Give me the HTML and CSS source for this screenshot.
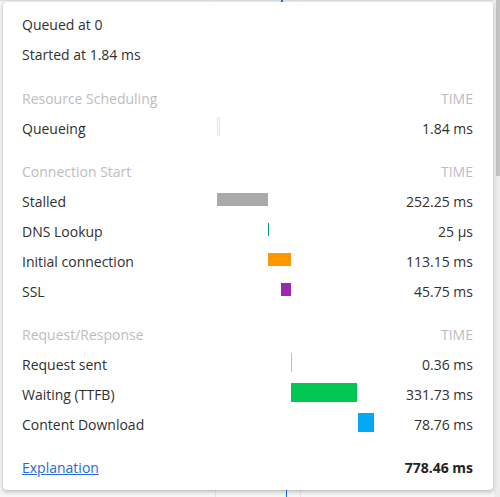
FILE: index.html
```html
<!DOCTYPE html>
<html>
<head>
<meta charset="utf-8">
<link rel="stylesheet" href="styles.css">
</head>
<body>
<div class="backdrop"></div>
<div class="scrollbar"><div class="thumb"></div></div>
<div class="popup">
  <div class="row"><span class="label">Queued at 0</span></div>
  <div class="row"><span class="label">Started at 1.84 ms</span></div>

  <div class="row header first"><span class="label">Resource Scheduling</span><span></span><span class="time">TIME</span></div>
  <div class="row"><span class="label">Queueing</span><span class="track"><span class="bar tick queueing" style="left:0%"></span></span><span class="time">1.84 ms</span></div>

  <div class="row header"><span class="label">Connection Start</span><span></span><span class="time">TIME</span></div>
  <div class="row"><span class="label">Stalled</span><span class="track"><span class="bar short stalled" style="left:0%;width:32.5%"></span></span><span class="time">252.25 ms</span></div>
  <div class="row"><span class="label">DNS Lookup</span><span class="track"><span class="bar short dns" style="left:32.5%"></span></span><span class="time">25 µs</span></div>
  <div class="row"><span class="label">Initial connection</span><span class="track"><span class="bar short initial" style="left:32.5%;width:14.7%"></span></span><span class="time">113.15 ms</span></div>
  <div class="row"><span class="label">SSL</span><span class="track"><span class="bar short ssl" style="left:40.8%;width:6.4%"></span></span><span class="time">45.75 ms</span></div>

  <div class="row header"><span class="label">Request/Response</span><span></span><span class="time">TIME</span></div>
  <div class="row"><span class="label">Request sent</span><span class="track"><span class="bar tall sent" style="left:47.1%"></span></span><span class="time">0.36 ms</span></div>
  <div class="row"><span class="label">Waiting (TTFB)</span><span class="track"><span class="bar tall waiting" style="left:47.1%;width:42.2%"></span></span><span class="time">331.73 ms</span></div>
  <div class="row"><span class="label">Content Download</span><span class="track"><span class="bar tall download" style="left:89.8%;width:10.2%"></span></span><span class="time">78.76 ms</span></div>

  <div class="row footer"><a class="label link" href="#">Explanation</a><span></span><span class="time total">778.46 ms</span></div>
</div>
</body>
</html>
```
FILE: styles.css
```css
html, body {
  margin: 0;
  padding: 0;
}
body {
  width: 500px;
  height: 497px;
  position: relative;
  overflow: hidden;
  background: #fafafa;
  font-family: "Open Sans", "Noto Sans", sans-serif;
  font-size: 14px;
  color: #303030;
}
.backdrop {
  position: absolute;
  inset: 0;
  background:
    linear-gradient(#e6e6e6, #e6e6e6) 215px 0 / 1px 100% no-repeat,
    linear-gradient(#e6e6e6, #e6e6e6) 300px 0 / 1px 100% no-repeat,
    linear-gradient(#1a73e8, #1a73e8) 281px 0 / 2px 3px no-repeat,
    linear-gradient(#1a73e8, #1a73e8) 286px 490px / 1px 7px no-repeat,
    linear-gradient(#dcdcdc, #dcdcdc) 0 0 / 100% 1px no-repeat,
    #f6f6f6;
}
.scrollbar {
  position: absolute;
  top: 0;
  right: 0;
  width: 6px;
  height: 497px;
  background: #ececec;
}
.thumb {
  margin-left: 2px;
  width: 4px;
  height: 176px;
  background: #c2c2c2;
}
.popup {
  position: absolute;
  left: 3px;
  top: 2px;
  width: 490px;
  box-sizing: border-box;
  padding: 7px 20px 8px 19px;
  background: #fff;
  border-radius: 3px;
  box-shadow: 0 2px 4px rgba(0, 0, 0, 0.22), 0 0 1px rgba(0, 0, 0, 0.35);
}
.row {
  display: grid;
  grid-template-columns: 195px 157px 1fr;
  align-items: center;
  height: 30px;
}
.header {
  margin-top: 13px;
  color: #bdbdbd;
}
.header.first {
  margin-top: 14px;
}
.footer {
  margin-top: 13px;
}
.label {
  white-space: nowrap;
}
.time {
  text-align: right;
  white-space: nowrap;
}
.total {
  font-weight: 700;
  color: #222;
}
.link {
  color: #2968d6;
  text-decoration: underline;
}
.track {
  position: relative;
  height: 30px;
}
.bar {
  position: absolute;
  display: block;
}
.short {
  top: 7px;
  height: 13px;
}
.tall {
  top: 4px;
  height: 19px;
}
.tick {
  top: 4px;
  height: 19px;
}
.queueing {
  box-sizing: border-box;
  width: 3px;
  border: 1px solid #e6e6e6;
}
.stalled { background: #aaaaaa; }
.dns { width: 1px; background: #009688; }
.initial { background: #ff9800; }
.ssl { background: #9c27b0; }
.sent { width: 1px; background: #b8bcc0; }
.waiting { background: #00c853; }
.download { background: #03a9f4; }
```
